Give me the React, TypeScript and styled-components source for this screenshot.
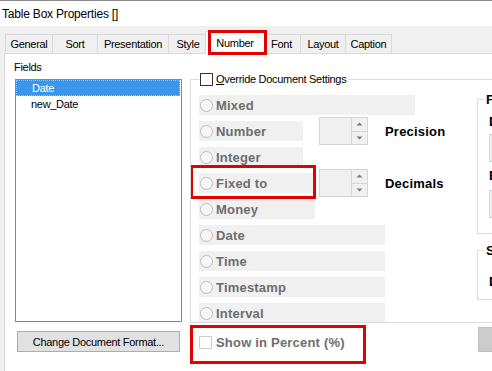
import React from "react";
import styled, { createGlobalStyle } from "styled-components";

const GlobalStyle = createGlobalStyle`
  html, body { margin: 0; padding: 0; background: #f0f0f0; overflow: hidden; }
  *, *::before, *::after { box-sizing: border-box; }
`;

const UI = `"Liberation Sans", Arial, sans-serif`;

const Window = styled.div`
  width: 492px;
  height: 371px;
  overflow: hidden;
  display: flex;
  flex-direction: column;
  background: #f0f0f0;
  font-family: ${UI};
  font-size: 11px;
  letter-spacing: -0.3px;
  color: #000;
`;

const TitleBar = styled.div`
  flex: none;
  height: 26px;
  background: #fff;
  border-top: 1px solid #8c8c8c;
  display: flex;
  align-items: center;
  padding-left: 2px;
  font-size: 12px;
  letter-spacing: -0.2px;
  color: #000;
`;

const TabStrip = styled.div`
  flex: none;
  height: 27px;
  display: flex;
  align-items: flex-end;
  padding-left: 5px;
`;

const Tab = styled.div<{ $w: number; $active?: boolean; $first?: boolean }>`
  position: relative;
  z-index: ${(p) => (p.$active ? 2 : 1)};
  flex: none;
  width: ${(p) => p.$w}px;
  height: ${(p) => (p.$active ? 23 : 19)}px;
  margin-left: ${(p) => (p.$first ? 0 : p.$active ? -3 : -1)}px;
  margin-right: ${(p) => (p.$active ? -2 : 0)}px;
  margin-bottom: ${(p) => (p.$active ? -1 : 0)}px;
  border: 1px solid #d9d9d9;
  border-bottom: none;
  background: ${(p) => (p.$active ? "#fff" : "#f0f0f0")};
  display: flex;
  align-items: center;
  justify-content: center;
  white-space: nowrap;
`;

const Highlight = styled.span<{ $t: number; $r: number; $b: number; $l: number }>`
  position: absolute;
  top: ${(p) => p.$t}px;
  right: ${(p) => p.$r}px;
  bottom: ${(p) => p.$b}px;
  left: ${(p) => p.$l}px;
  border: 3px solid #e30000;
  pointer-events: none;
  z-index: 5;
`;

const Panel = styled.div`
  flex: 1;
  margin-left: 4px;
  background: #fff;
  border-left: 1px solid #d9d9d9;
  border-top: 1px solid #d9d9d9;
  padding: 7px 0 0 9px;
  display: grid;
  grid-template-columns: 168px 1fr;
  grid-template-rows: 262px auto;
  column-gap: 8px;
  align-items: start;
`;

const LeftCol = styled.div`
  display: flex;
  flex-direction: column;
`;

const FieldsLabel = styled.div`
  line-height: 13px;
  height: 13px;
`;

const ListBox = styled.div`
  margin: 5px 0 0 1px;
  width: 167px;
  height: 243px;
  border: 1px solid #828790;
  background: #fff;
  display: flex;
  flex-direction: column;
`;

const ListItem = styled.div<{ $selected?: boolean; $indent: number }>`
  height: 16px;
  line-height: 16px;
  margin-right: 1px;
  padding-left: ${(p) => p.$indent}px;
  background: ${(p) => (p.$selected ? "#3d95ea" : "transparent")};
  color: ${(p) => (p.$selected ? "#fff" : "#000")};
  border: 1px dotted ${(p) => (p.$selected ? "#8cc0f2" : "transparent")};
  display: flex;
  align-items: center;
`;

const Group = styled.fieldset`
  margin: 12px 0 0 0;
  padding: 9px 0 0 8px;
  border: 1px solid #dcdcdc;
  height: 250px;
  width: 440px;
  min-width: 0;
  overflow: hidden;
  display: flex;
  align-items: flex-start;
`;

const Legend = styled.legend`
  padding: 0 2px 0 1px;
  height: 13px;
  line-height: 13px;
  display: flex;
  align-items: center;
  gap: 3px;
  white-space: nowrap;
`;

const CheckBox = styled.span<{ $disabled?: boolean }>`
  flex: none;
  width: 13px;
  height: 13px;
  border: 1px solid ${(p) => (p.$disabled ? "#cdcdcd" : "#333")};
  background: #fff;
`;

const Mnemonic = styled.span`
  text-decoration: underline;
`;

const RadioCol = styled.div`
  flex: none;
  width: 278px;
  display: flex;
  flex-direction: column;
  gap: 6px;
`;

const RadioItem = styled.div<{ $w: number }>`
  position: relative;
  width: ${(p) => p.$w}px;
  height: 20px;
  background: #f0f0f0;
  display: flex;
  align-items: center;
  gap: 3px;
  padding-left: 1px;
`;

const RadioCircle = styled.span`
  flex: none;
  width: 13px;
  height: 13px;
  border-radius: 50%;
  border: 1px solid #bdbdbd;
  background: #f6f6f6;
`;

const BoldText = styled.span<{ $dim?: boolean }>`
  font-weight: bold;
  font-size: 13px;
  letter-spacing: 0.2px;
  color: ${(p) => (p.$dim ? "#6d6d6d" : "#000")};
  white-space: nowrap;
`;

const SpinRow = styled.div`
  height: 20px;
  display: grid;
  grid-template-columns: 120px 49px auto;
  grid-template-rows: 20px;
  align-items: center;
`;

const Spinner = styled.div`
  width: 49px;
  height: 28px;
  margin: -4px 0;
  border: 1px solid #d5d5d5;
  background: #f0f0f0;
  display: flex;
  justify-content: flex-end;
`;

const SpinButtons = styled.div`
  width: 16px;
  border-left: 1px solid #d5d5d5;
  display: flex;
  flex-direction: column;
`;

const SpinBtn = styled.div<{ $lower?: boolean }>`
  flex: 1;
  display: flex;
  align-items: center;
  justify-content: center;
  border-top: ${(p) => (p.$lower ? "1px solid #d5d5d5" : "none")};
`;

const SpinLabel = styled(BoldText)`
  margin-left: 17px;
`;

const SideCol = styled.div`
  flex: none;
  width: 150px;
  margin-top: -3px;
  display: flex;
  flex-direction: column;
`;

const SubGroup = styled.fieldset<{ $pt: number; $pb: number; $mt: number }>`
  margin: ${(p) => p.$mt}px 0 0 0;
  padding: ${(p) => p.$pt}px 0 ${(p) => p.$pb}px 11px;
  border: 1px solid #dcdcdc;
  min-width: 0;
  display: flex;
  flex-direction: column;
`;

const SubLegend = styled.legend`
  margin-left: -5px;
  padding: 0 2px;
  line-height: 15px;
  font-weight: bold;
  font-size: 13px;
  letter-spacing: 0.2px;
  white-space: nowrap;
`;

const SubLabel = styled(BoldText)<{ $mt?: number }>`
  display: block;
  line-height: 15px;
  margin-top: ${(p) => p.$mt ?? 0}px;
`;

const SubInput = styled.div<{ $mt: number }>`
  margin-top: ${(p) => p.$mt}px;
  width: 130px;
  height: 28px;
  border: 1px solid #d5d5d5;
  background: #f0f0f0;
`;

const ButtonCell = styled.div`
  display: flex;
`;

const PushButton = styled.button`
  margin: 8px 0 0 3px;
  width: 163px;
  height: 21px;
  padding: 0;
  background: #e1e1e1;
  border: 1px solid #adadad;
  font: inherit;
  letter-spacing: inherit;
  color: #000;
  white-space: nowrap;
`;

const BottomRight = styled.div`
  display: grid;
  grid-template-columns: 278px auto;
  padding-left: 9px;
  align-items: start;
`;

const CheckRow = styled.div`
  position: relative;
  margin-top: 13px;
  width: 154px;
  height: 13px;
  display: flex;
  align-items: center;
  gap: 4px;
`;

const GrayButton = styled.div`
  margin: 4px 0 0 1px;
  width: 100px;
  height: 25px;
  background: #cccccc;
  border: 1px solid #bfbfbf;
`;

const Arrow = ({ up }: { up?: boolean }) => (
  <svg width="7" height="4" viewBox="0 0 7 4">
    <path d={up ? "M0.5 3.5 L3.5 0.5 L6.5 3.5 Z" : "M0.5 0.5 L3.5 3.5 L6.5 0.5 Z"} fill="#7a7a7a" />
  </svg>
);

const Spin = () => (
  <Spinner>
    <SpinButtons>
      <SpinBtn>
        <Arrow up />
      </SpinBtn>
      <SpinBtn $lower>
        <Arrow />
      </SpinBtn>
    </SpinButtons>
  </Spinner>
);

const Radio = ({ label, w, children }: { label: string; w: number; children?: React.ReactNode }) => (
  <RadioItem $w={w}>
    <RadioCircle />
    <BoldText $dim>{label}</BoldText>
    {children}
  </RadioItem>
);

const tabs: { label: string; w: number }[] = [
  { label: "General", w: 48 },
  { label: "Sort", w: 46 },
  { label: "Presentation", w: 72 },
  { label: "Style", w: 40 },
  { label: "Number", w: 60 },
  { label: "Font", w: 39 },
  { label: "Layout", w: 46 },
  { label: "Caption", w: 47 },
];

export default function App() {
  return (
    <>
      <GlobalStyle />
      <Window>
        <TitleBar>Table Box Properties []</TitleBar>
        <TabStrip>
          {tabs.map((t, i) => {
            const active = t.label === "Number";
            return (
              <Tab key={t.label} $w={t.w} $active={active} $first={i === 0}>
                {t.label}
                {active && <Highlight $t={-2} $r={-3} $b={-1} $l={2} />}
              </Tab>
            );
          })}
        </TabStrip>
        <Panel>
          <LeftCol>
            <FieldsLabel>Fields</FieldsLabel>
            <ListBox>
              <ListItem $selected $indent={15}>Date</ListItem>
              <ListItem $indent={14}>new_Date</ListItem>
            </ListBox>
          </LeftCol>
          <Group>
            <Legend>
              <CheckBox />
              <span>
                <Mnemonic>O</Mnemonic>verride Document Settings
              </span>
            </Legend>
            <RadioCol>
              <Radio label="Mixed" w={216} />
              <SpinRow>
                <Radio label="Number" w={104} />
                <Spin />
                <SpinLabel>Precision</SpinLabel>
              </SpinRow>
              <Radio label="Integer" w={104} />
              <SpinRow>
                <Radio label="Fixed to" w={114}>
                  <Highlight $t={-8} $r={-3} $b={-6} $l={-9} />
                </Radio>
                <Spin />
                <SpinLabel>Decimals</SpinLabel>
              </SpinRow>
              <Radio label="Money" w={116} />
              <Radio label="Date" w={186} />
              <Radio label="Time" w={186} />
              <Radio label="Timestamp" w={186} />
              <Radio label="Interval" w={186} />
            </RadioCol>
            <SideCol>
              <SubGroup $mt={0} $pt={7} $pb={15}>
                <SubLegend>Format Pattern</SubLegend>
                <SubLabel>Decimal Sep.</SubLabel>
                <SubInput $mt={5} />
                <SubLabel $mt={6}>Builder</SubLabel>
                <SubInput $mt={7} />
              </SubGroup>
              <SubGroup $mt={9} $pt={16} $pb={10}>
                <SubLegend>Separators</SubLegend>
                <SubLabel>Decimal</SubLabel>
              </SubGroup>
            </SideCol>
          </Group>
          <ButtonCell>
            <PushButton>Change Document Format...</PushButton>
          </ButtonCell>
          <BottomRight>
            <CheckRow>
              <CheckBox $disabled />
              <BoldText $dim>Show in Percent (%)</BoldText>
              <Highlight $t={-11} $r={-13} $b={-15} $l={-9} />
            </CheckRow>
            <GrayButton />
          </BottomRight>
        </Panel>
      </Window>
    </>
  );
}
